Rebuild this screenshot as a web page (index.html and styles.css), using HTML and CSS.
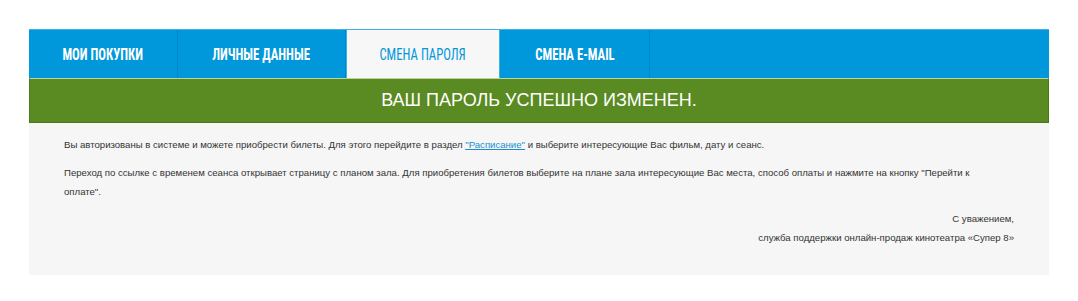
FILE: index.html
```html
<!DOCTYPE html>
<html lang="ru">
<head>
    <meta charset="UTF-8">
    <title>Смена пароля</title>
    <link rel="stylesheet" href="styles.css">
</head>
<body>
<div class="account">
    <!-- Tabs -->
    <div class="tabs">
        <a href="#" class="tab tab-orders"><span>Мои покупки</span></a>
        <a href="#" class="tab tab-profile"><span>Личные данные</span></a>
        <a href="#" class="tab tab-password active"><span>Смена пароля</span></a>
        <a href="#" class="tab tab-email"><span>Смена e-mail</span></a>
    </div>

    <div class="notice">Ваш пароль успешно изменен.</div>

    <div class="content">
        <p>Вы авторизованы в системе и можете приобрести билеты. Для этого перейдите в раздел <a href="#">"Расписание"</a> и выберите интересующие Вас фильм, дату и сеанс.</p>
        <p>Переход по ссылке с временем сеанса открывает страницу с планом зала. Для приобретения билетов выберите на плане зала интересующие Вас места, способ оплаты и нажмите на кнопку "Перейти к оплате".</p>
        <p class="signature">С уважением,<br>служба поддержки онлайн-продаж кинотеатра «Супер 8»</p>
    </div>
</div>
</body>
</html>
```

FILE: styles.css
```css
body {
    margin: 0;
    background: #fff;
    font-family: "Liberation Sans", Arial, sans-serif;
}

.account {
    width: 1020px;
    margin: 29px 0 0 29px;
}

.tabs {
    display: flex;
    height: 49px;
    background: #0098da;
    border-top: 1px solid #3eb0e4;
    box-sizing: border-box;
}

.tab {
    display: block;
    box-sizing: border-box;
    height: 48px;
    line-height: 48px;
    text-align: center;
    color: #fff;
    text-decoration: none;
    text-transform: uppercase;
    font-family: "Roboto Condensed", "Liberation Sans", sans-serif;
    font-weight: bold;
    font-size: 17px;
    border-right: 1px solid #0088c8;
    white-space: nowrap;
}

.tab span {
    display: inline-block;
    transform: scaleX(0.75);
}

.tab-orders { width: 149px; }
.tab-profile { width: 168px; }
.tab-password { width: 154px; }
.tab-email { width: 150px; }

.tab.active {
    background: #f7f7f7;
    color: #0098da;
    font-weight: normal;
    border-right: 1px solid #3eb0e4;
    border-left: 1px solid #3eb0e4;
}

.notice {
    height: 45px;
    line-height: 43px;
    box-sizing: border-box;
    background: #5a8a22;
    border: 1px solid #4a7a18;
    border-top-color: #b9d39c;
    color: #fff;
    font-size: 18px;
    text-align: center;
    text-transform: uppercase;
}

.content {
    background: #f6f6f6;
    padding: 12px 35px 28px;
    color: #333;
    font-size: 9.6px;
    line-height: 19px;
}

.content p {
    max-width: 920px;
    margin: 0 0 9px;
}

.content a {
    color: #1a8fd0;
}

.content .signature {
    max-width: none;
    text-align: right;
    margin: -1px 0 0;
}
```
